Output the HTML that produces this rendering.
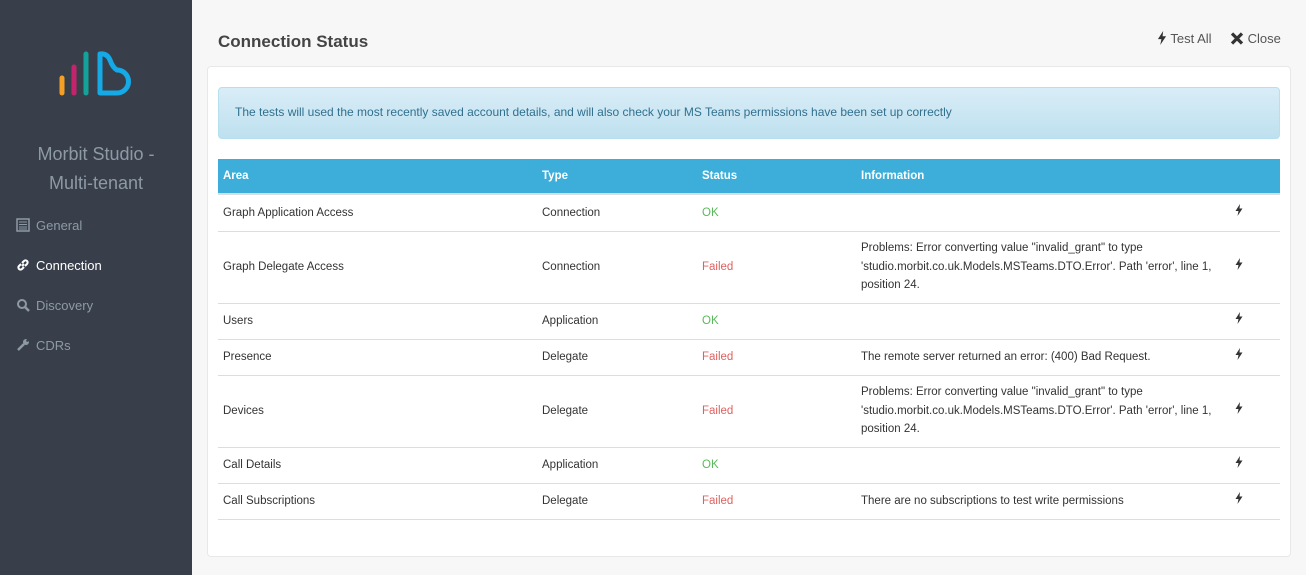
<!DOCTYPE html>
<html><head><style>
*{box-sizing:border-box;margin:0;padding:0}
body{width:1306px;height:575px;overflow:hidden;background:#f7f7f7;font-family:"Liberation Sans",sans-serif;font-size:12px;color:#333;position:relative}
.side{position:absolute;left:0;top:0;width:192px;height:575px;background:#383f4b}
.brand{position:absolute;left:0;width:192px;top:140px;text-align:center;color:#8d9aa5;font-size:18px;line-height:29px}
.nav{position:absolute;left:16px;color:#8d9aa5;font-size:13px}
.nav svg{vertical-align:-2px;margin-right:6px}
h1{position:absolute;left:218px;top:32px;font-size:17px;font-weight:bold;color:#444}
.tools{position:absolute;top:31px;font-size:13px;color:#555}
.tools svg{vertical-align:-2px}
.card{position:absolute;left:207px;top:66px;width:1084px;height:491px;background:#fff;border:1px solid #e8e8e8;border-radius:4px}
.alert{position:absolute;left:10px;top:20px;width:1062px;height:52px;border:1px solid #b6e0ee;border-radius:4px;background:linear-gradient(#d9edf7,#bee0ef);color:#31708f;padding:17px 16px;font-size:12px}
table{position:absolute;left:10px;top:92px;width:1062px;border-collapse:collapse}
th{background:#3daed9;color:#fff;text-align:left;height:35px;padding:0 5px;font-size:11.5px;border-bottom:2px solid #ddd}
td{padding:0 5px;border-bottom:1px solid #ddd;font-size:11.5px;line-height:18.5px;vertical-align:middle}
td:last-child{padding-left:5px}
.ok{color:#5cb85c}.f{color:#e06060}
</style></head><body>
<svg width="0" height="0" style="position:absolute"><defs><symbol id="b" viewBox="0 0 8 12"><path d="M5 0L0.5 7H3.5L2.5 12L7.5 4.5H4.5Z" fill="#333"/></symbol></defs></svg>
<div class="side">
<svg style="position:absolute;left:55px;top:48px" width="80" height="52" viewBox="0 0 80 52">
<line x1="7" y1="30" x2="7" y2="45" stroke="#f5a024" stroke-width="5" stroke-linecap="round"/>
<line x1="19" y1="19" x2="19" y2="45" stroke="#c4246c" stroke-width="5" stroke-linecap="round"/>
<line x1="31" y1="6" x2="31" y2="45" stroke="#14a39a" stroke-width="5" stroke-linecap="round"/>
<path d="M45 45 V6 Q52 5 55 12 Q58 20 62 22 A11.5 11.5 0 0 1 62 45 Z" fill="none" stroke="#15a9e6" stroke-width="5" stroke-linecap="round" stroke-linejoin="round"/>
</svg>
<div class="brand">Morbit Studio -<br>Multi-tenant</div>
<div class="nav" style="top:218px"><svg width="14" height="14" viewBox="0 0 14 14"><rect x="1" y="1" width="12" height="12" fill="none" stroke="#8d9aa5" stroke-width="1.5"/><path d="M3 4h8M3 6.5h8M3 9h8M3 11h8" stroke="#8d9aa5"/></svg>General</div>
<div class="nav" style="top:258px;color:#fff"><svg width="14" height="14" viewBox="0 0 14 14"><path d="M6 8l2-2M5 6L3 8a2 2 0 0 0 3 3l2-2M9 8l2-2a2 2 0 0 0-3-3L6 5" fill="none" stroke="#fff" stroke-width="2"/></svg>Connection</div>
<div class="nav" style="top:298px"><svg width="14" height="14" viewBox="0 0 14 14"><circle cx="6" cy="6" r="4" fill="none" stroke="#8d9aa5" stroke-width="2"/><path d="M9 9l4 4" stroke="#8d9aa5" stroke-width="2.5"/></svg>Discovery</div>
<div class="nav" style="top:338px"><svg width="14" height="14" viewBox="0 0 14 14"><path d="M2 12l6-6" stroke="#8d9aa5" stroke-width="2.5"/><circle cx="10" cy="4" r="3" fill="#8d9aa5"/><circle cx="11.5" cy="2.5" r="1.3" fill="#383f4b"/></svg>CDRs</div>
</div>
<h1>Connection Status</h1>
<div class="tools" style="left:1157px"><svg width="10" height="14"><use href="#b" width="10" height="14"/></svg> Test All</div>
<div class="tools" style="left:1230px"><svg width="14" height="13" viewBox="0 0 14 13"><path d="M2 1.5L12 11.5M12 1.5L2 11.5" stroke="#333" stroke-width="3.2"/></svg> Close</div>
<div class="card">
<div class="alert">The tests will used the most recently saved account details, and will also check your MS Teams permissions have been set up correctly</div>
<table>
<tr><th style="width:319px">Area</th><th style="width:160px">Type</th><th style="width:159px">Status</th><th>Information</th><th style="width:50px"></th></tr>
<tr style="height:37px"><td>Graph Application Access</td><td>Connection</td><td class="ok">OK</td><td></td><td><svg width="8" height="12"><use href="#b"/></svg></td></tr>
<tr style="height:72px"><td>Graph Delegate Access</td><td>Connection</td><td class="f">Failed</td><td>Problems: Error converting value "invalid_grant" to type 'studio.morbit.co.uk.Models.MSTeams.DTO.Error'. Path 'error', line 1, position 24.</td><td><svg width="8" height="12"><use href="#b"/></svg></td></tr>
<tr style="height:36px"><td>Users</td><td>Application</td><td class="ok">OK</td><td></td><td><svg width="8" height="12"><use href="#b"/></svg></td></tr>
<tr style="height:36px"><td>Presence</td><td>Delegate</td><td class="f">Failed</td><td>The remote server returned an error: (400) Bad Request.</td><td><svg width="8" height="12"><use href="#b"/></svg></td></tr>
<tr style="height:72px"><td>Devices</td><td>Delegate</td><td class="f">Failed</td><td>Problems: Error converting value "invalid_grant" to type 'studio.morbit.co.uk.Models.MSTeams.DTO.Error'. Path 'error', line 1, position 24.</td><td><svg width="8" height="12"><use href="#b"/></svg></td></tr>
<tr style="height:36px"><td>Call Details</td><td>Application</td><td class="ok">OK</td><td></td><td><svg width="8" height="12"><use href="#b"/></svg></td></tr>
<tr style="height:36px"><td>Call Subscriptions</td><td>Delegate</td><td class="f">Failed</td><td>There are no subscriptions to test write permissions</td><td><svg width="8" height="12"><use href="#b"/></svg></td></tr>
</table>
</div>
</body></html>
